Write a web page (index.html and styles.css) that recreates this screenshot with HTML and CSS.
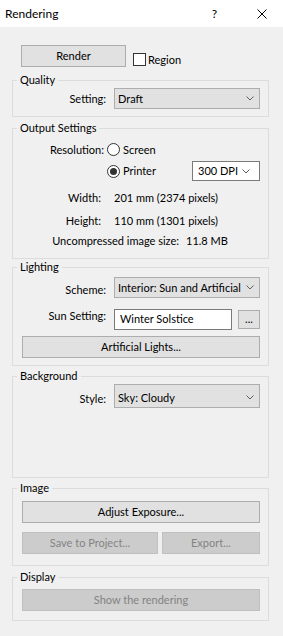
FILE: index.html
```html
<!DOCTYPE html>
<html lang="en">
<head>
  <meta charset="UTF-8" />
  <meta name="viewport" content="width=device-width, initial-scale=1.0" />
  <title>Rendering</title>
  <link rel="stylesheet" href="styles.css">
</head>
<body>
  <!-- Window title bar -->
  <div class="titlebar">
    <span class="title">Rendering</span>
    <span class="help">?</span>
    <span class="close">
      <svg width="10" height="10" viewBox="0 0 10 10">
        <path d="M0.5 0.5 L9.5 9.5 M9.5 0.5 L0.5 9.5" stroke="#000" stroke-width="1" fill="none" />
      </svg>
    </span>
  </div>

  <div class="dialog">
    <!-- Render button and region checkbox -->
    <div class="render-row">
      <button type="button" class="btn render-btn">Render</button>
      <label class="check"><span class="checkbox"></span>Region</label>
    </div>

    <!-- Quality -->
    <fieldset class="group quality">
      <legend>Quality</legend>
      <div class="body">
        <div class="row">
          <span class="label">Setting:</span>
          <div class="combo">Draft
            <svg class="chev" width="8" height="5" viewBox="0 0 8 5"><polyline points="0.5,0.5 4,4 7.5,0.5" /></svg>
          </div>
        </div>
      </div>
    </fieldset>

    <!-- Output settings -->
    <fieldset class="group output">
      <legend>Output Settings</legend>
      <div class="body">
        <div class="row res-row">
          <span class="label label-tight">Resolution:</span>
          <span class="radio"></span>
          <span class="radio-text">Screen</span>
        </div>
        <div class="row printer-row">
          <span class="label label-tight"></span>
          <span class="radio checked"></span>
          <span class="radio-text">Printer</span>
          <div class="combo combo-white dpi">300 DPI
            <svg class="chev" width="8" height="5" viewBox="0 0 8 5"><polyline points="0.5,0.5 4,4 7.5,0.5" /></svg>
          </div>
        </div>
        <div class="row info-row width-row">
          <span class="label label-info">Width:</span>
          <span>201 mm (2374 pixels)</span>
        </div>
        <div class="row info-row height-row">
          <span class="label label-info">Height:</span>
          <span>110 mm (1301 pixels)</span>
        </div>
        <div class="row info-row size-row">
          <span class="label label-size">Uncompressed image size:</span>
          <span>11.8 MB</span>
        </div>
      </div>
    </fieldset>

    <!-- Lighting -->
    <fieldset class="group lighting">
      <legend>Lighting</legend>
      <div class="body">
        <div class="row">
          <span class="label label-scheme">Scheme:</span>
          <div class="combo">Interior: Sun and Artificial
            <svg class="chev" width="8" height="5" viewBox="0 0 8 5"><polyline points="0.5,0.5 4,4 7.5,0.5" /></svg>
          </div>
        </div>
        <div class="row sun-row">
          <span class="label label-sun">Sun Setting:</span>
          <div class="textbox">Winter Solstice</div>
          <button type="button" class="btn dots-btn">...</button>
        </div>
        <button type="button" class="btn wide-btn lights-btn">Artificial Lights...</button>
      </div>
    </fieldset>

    <!-- Background -->
    <fieldset class="group background">
      <legend>Background</legend>
      <div class="body">
        <div class="row">
          <span class="label label-style">Style:</span>
          <div class="combo combo-tall">Sky: Cloudy
            <svg class="chev" width="8" height="5" viewBox="0 0 8 5"><polyline points="0.5,0.5 4,4 7.5,0.5" /></svg>
          </div>
        </div>
      </div>
    </fieldset>

    <!-- Image -->
    <fieldset class="group image">
      <legend>Image</legend>
      <div class="body">
        <button type="button" class="btn wide-btn exposure-btn">Adjust Exposure...</button>
        <div class="btn-row">
          <button type="button" class="btn save-btn" disabled>Save to Project...</button>
          <button type="button" class="btn export-btn" disabled>Export...</button>
        </div>
      </div>
    </fieldset>

    <!-- Display -->
    <fieldset class="group display">
      <legend>Display</legend>
      <div class="body">
        <button type="button" class="btn wide-btn show-btn" disabled>Show the rendering</button>
      </div>
    </fieldset>
  </div>
</body>
</html>
```

FILE: styles.css
```css
body {
  margin: 0;
  width: 283px;
  height: 636px;
  background-color: #f0f0f0;
  font-family: Lato, "Noto Sans", Arial, sans-serif;
  font-size: 11px;
  line-height: 16px;
  color: #000;
  overflow: hidden;
}

/* Title bar */
.titlebar {
  height: 27px;
  background: #fff;
  display: flex;
  align-items: center;
}
.title { margin-left: 5px; font-size: 12px; }
.help { margin-left: auto; margin-right: 40px; font-size: 12px; }
.close { display: flex; margin-right: 16px; }

.dialog {
  padding: 18px 14px 0 12px;
}

/* Buttons */
.btn {
  font-family: inherit;
  font-size: 11px;
  line-height: 16px;
  color: #000;
  height: 22px;
  padding: 0;
  margin: 0;
  background-color: #e1e1e1;
  border: 1px solid #adadad;
  border-radius: 0;
  display: flex;
  align-items: center;
  justify-content: center;
}
.btn:disabled {
  background-color: #cccccc;
  border-color: #bfbfbf;
  color: #838383;
}
.wide-btn { width: 100%; }

/* Render row */
.render-row {
  display: flex;
  align-items: flex-end;
  height: 22px;
}
.render-btn {
  width: 105px;
  margin-left: 9px;
}
.check {
  display: flex;
  align-items: center;
  height: 13px;
  margin-left: 7px;
  margin-bottom: 1px;
}
.checkbox {
  width: 11px;
  height: 11px;
  border: 1px solid #333;
  background: #fff;
  margin-right: 2px;
}

/* Group boxes */
.group {
  margin: 0;
  padding: 0;
  border: 1px solid #dcdcdc;
  min-width: 0;
}
.group legend {
  margin-left: 4px;
  padding: 0 3px;
  line-height: 16px;
}
.body {
  padding: 0 8px 0 9px;
}
.row {
  display: flex;
  align-items: center;
}
.label {
  width: 84px;
  flex-shrink: 0;
  text-align: right;
  margin-right: 8px;
}

.quality { margin-top: 5px; }
.quality .body { padding-bottom: 7px; }

.output { margin-top: 3px; }
.output .body { padding-bottom: 9px; }
.label-tight { margin-right: 1px; padding-right: 2px; box-sizing: border-box; }
.res-row { height: 13px; margin-top: 7px; }
.printer-row { height: 20px; margin-top: 5px; }
.radio {
  width: 11px;
  height: 11px;
  border: 1px solid #333;
  border-radius: 50%;
  background: #fff;
  display: flex;
  align-items: center;
  justify-content: center;
  flex-shrink: 0;
}
.radio.checked::after {
  content: "";
  width: 7px;
  height: 7px;
  border-radius: 50%;
  background: #333;
}
.radio-text { margin-left: 3px; }
.info-row { height: 16px; }
.label-info { padding-right: 5px; box-sizing: border-box; }
.width-row { margin-top: 9px; }
.height-row { margin-top: 7px; }
.size-row { margin-top: 4px; }
.label-size { width: 157px; margin-right: 7px; }

/* Combo boxes and text fields */
.combo {
  flex: 1;
  height: 21px;
  box-sizing: border-box;
  background-color: #e1e1e1;
  border: 1px solid #adadad;
  padding-left: 3px;
  display: flex;
  align-items: center;
  white-space: nowrap;
}
.chev {
  margin-left: auto;
  margin-right: 5px;
  flex-shrink: 0;
}
.chev polyline {
  fill: none;
  stroke: #606060;
  stroke-width: 1;
}
.combo-white {
  background-color: #fff;
  border-color: #7a7a7a;
}
.dpi {
  flex: none;
  width: 68px;
  height: 20px;
  margin-left: auto;
  padding-left: 5px;
}
.dpi .chev { margin-right: 9px; }
.combo-tall {
  height: 24px;
  padding-top: 3px;
}

.textbox {
  width: 118px;
  height: 21px;
  box-sizing: border-box;
  background: #fff;
  border: 1px solid #7a7a7a;
  padding-left: 5px;
  display: flex;
  align-items: center;
}
.dots-btn {
  width: 22px;
  height: 19px;
  margin-left: 6px;
  padding-bottom: 1px;
}

.lighting .body { padding-top: 2px; padding-bottom: 7px; }
.label-scheme { padding-top: 4px; }
.sun-row { margin-top: 10px; }
.label-sun { padding-bottom: 6px; }
.lights-btn { margin-top: 6px; }

.background { margin-top: 2px; }
.background .body { padding-bottom: 69px; }
.label-style { padding-top: 6px; }

.image { margin-top: 2px; }
.image .body { padding-bottom: 11px; }
.exposure-btn { margin-top: 5px; }
.btn-row {
  display: flex;
  gap: 4px;
  margin-top: 9px;
}
.save-btn { width: 136px; }
.export-btn { flex: 1; }

.display { margin-top: 3px; }
.display .body { padding-bottom: 9px; }
.show-btn { margin-top: 4px; }
```
